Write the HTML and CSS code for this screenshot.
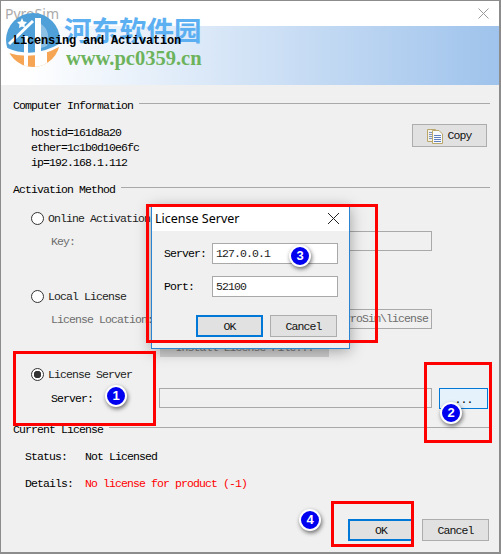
FILE: index.html
```html
<!DOCTYPE html>
<html lang="en">
<head>
    <meta charset="UTF-8">
    <title>PyroSim Licensing and Activation</title>
    <link rel="stylesheet" href="styles.css">
</head>
<body>
    <div class="window">
        <div class="titlebar">
            <span class="title">PyroSim</span>
            <svg class="close close-main" width="11" height="11" viewBox="0 0 11 11"><path d="M0.5 0.5L10.5 10.5M10.5 0.5L0.5 10.5" stroke="#9a9a9a" fill="none"/></svg>
        </div>
        <div class="banner"><span class="banner-text">Licensing and Activation</span></div>

        <div class="content">
            <div class="section-head info-head"><span>Computer Information</span><i></i></div>
            <div class="info-row">
                <div class="info">
                    <div>hostid=161d8a20</div>
                    <div>ether=1c1b0d10e6fc</div>
                    <div>ip=192.168.1.112</div>
                </div>
                <button class="btn copy-btn">
                    <svg width="16" height="16" viewBox="0 0 16 16">
                        <path d="M0.5 1.5H8.5V13.5H0.5Z" fill="#f4f1e4" stroke="#b9a76c"/>
                        <path d="M5.5 2.5H12L15.5 6V15.500H5.5Z" fill="#f7f9fd" stroke="#b9a76c"/>
                        <path d="M7 7.5H14M7 9.5H14M7 11.5H14M7 13.5H14" stroke="#5f7fbe"/>
                        <path d="M2 4.5H5M2 6.5H5M2 8.5H5M2 10.5H5" stroke="#7f93c0"/>
                    </svg>
                    <span>Copy</span>
                </button>
            </div>

            <div class="section-head method-head"><span>Activation Method</span><i></i></div>

            <div class="radio-row online-row"><span class="radio"></span>Online Activation</div>
            <div class="field-row key-row">
                <span class="field-label muted">Key:</span>
                <span class="input key-input"></span>
            </div>

            <div class="radio-row local-row"><span class="radio"></span>Local License</div>
            <div class="field-row location-row">
                <span class="field-label muted">License Location:</span>
                <span class="input location-input muted">C:\Program Files\PyroSim\license</span>
            </div>
            <div class="install-row"><span class="install-btn">Install License File...</span></div>

            <div class="radio-row server-row"><span class="radio checked"></span>License Server</div>
            <div class="field-row server-field">
                <span class="field-label">Server:</span>
                <span class="input server-input"></span>
                <span class="browse-btn">...</span>
            </div>

            <div class="section-head current-head"><span>Current License</span><i></i></div>
            <div class="status-row status-first"><span class="status-label">Status:</span><span>Not Licensed</span></div>
            <div class="status-row status-second"><span class="status-label">Details:</span><span class="error">No license for product (-1)</span></div>

            <div class="actions">
                <button class="btn ok-main">OK</button>
                <button class="btn cancel-main">Cancel</button>
            </div>
        </div>
    </div>

    <!-- dialog on top of the main window -->
    <div class="dialog">
        <div class="dialog-title">
            <span>License Server</span>
            <svg width="13" height="13" viewBox="0 0 13 13"><path d="M1 1L12 12M12 1L1 12" stroke="#222" fill="none"/></svg>
        </div>
        <div class="dialog-body">
            <div class="dialog-row"><span class="dialog-label">Server:</span><span class="input dialog-input">127.0.0.1</span></div>
            <div class="dialog-row"><span class="dialog-label">Port:</span><span class="input dialog-input">52100</span></div>
            <div class="dialog-actions">
                <button class="btn dialog-ok">OK</button>
                <button class="btn dialog-cancel">Cancel</button>
            </div>
        </div>
    </div>

    <!-- annotations -->
    <div class="mark mark-1"></div>
    <div class="mark mark-2"></div>
    <div class="mark mark-3"></div>
    <div class="mark mark-4"></div>
    <div class="badge badge-1">1</div>
    <div class="badge badge-2">2</div>
    <div class="badge badge-3">3</div>
    <div class="badge badge-4">4</div>

    <!-- watermark -->
    <svg class="wm-logo" width="56" height="56" viewBox="0 0 56 56">
        <defs><clipPath id="disc"><circle cx="28" cy="28" r="27"/></clipPath></defs>
        <g clip-path="url(#disc)">
            <path d="M0 0H56V31Q28 48 0 35Z" fill="#4f9fd8"/>
            <path d="M0 40Q28 50 56 34V56H0Z" fill="#f5a553"/>
            <path d="M4 32L28 9" stroke="#fff" stroke-width="3" fill="none"/>
            <path d="M30 6H36V56H30Z" fill="#fff"/>
            <path d="M19 24H23V56H19Z" fill="#fff"/>
            <path d="M36 40H42V56H36Z" fill="#fff"/>
            <path d="M36 12Q46 18 42 34L36 36Z" fill="#fff" fill-opacity="0.35"/>
        </g>
        <path d="M17 6L18.500 9.500L22 10L19.500 12.500L20 16L17 14.500L14 16L14.500 12.500L12 10L15.500 9.500Z" fill="#fff"/>
    </svg>
    <div class="wm-cn">河东软件园</div>
    <div class="wm-url">www.pc0359.cn</div>
</body>
</html>
```
FILE: styles.css
```css
* {
    box-sizing: border-box;
}
html, body {
    margin: 0;
    padding: 0;
}
body {
    width: 501px;
    height: 554px;
    position: relative;
    overflow: hidden;
    background: #f0f0f0;
    font-family: "Liberation Mono", monospace;
    font-size: 11.5px;
    letter-spacing: -0.9px;
    color: #000;
}
.window {
    width: 501px;
    height: 554px;
    border: 1px solid #8c8c8c;
    border-width: 1px 2px 2px 1px;
    background: #f0f0f0;
}
.titlebar {
    height: 25px;
    background: #fff;
    display: flex;
    align-items: center;
    justify-content: space-between;
    padding: 0 10px 0 4px;
}
.title {
    font-family: "Noto Sans", sans-serif;
    font-size: 14px;
    letter-spacing: 0;
    color: #aaa;
}
.banner {
    height: 59px;
    background: linear-gradient(to right, #fff 5%, #9fc3ec 100%);
    padding: 7px 0 0 12px;
    font-size: 12px;
    font-weight: bold;
    line-height: 16px;
    letter-spacing: -0.2px;
    color: #000;
}
.banner-text {
    position: relative;
    z-index: 1;
}
.content {
    padding-left: 12px;
}
.section-head {
    display: flex;
    align-items: center;
    gap: 6px;
    height: 14px;
    width: 477px;
}
.section-head i {
    flex: 1;
    height: 1px;
    margin-top: -4px;
    background: #a9a9a9;
}
.info-head {
    margin-top: 13px;
}
.info-row {
    display: flex;
    justify-content: space-between;
    width: 474px;
    padding: 12px 0 0 18px;
    height: 70px;
}
.info {
    line-height: 15px;
    padding-top: 1px;
}
.btn {
    font-family: inherit;
    font-size: inherit;
    letter-spacing: inherit;
    color: #111;
    background: #e1e1e1;
    border: 1px solid #adadad;
    padding: 0;
    height: 22px;
}
.copy-btn {
    width: 75px;
    height: 23px;
    display: flex;
    align-items: center;
    justify-content: center;
    gap: 4px;
}
.radio-row {
    display: flex;
    align-items: center;
    gap: 4px;
    height: 14px;
    padding-left: 18px;
    color: #222;
}
.radio {
    width: 13px;
    height: 13px;
    border: 1px solid #333;
    border-radius: 50%;
    background: #fff;
}
.radio.checked {
    background: radial-gradient(circle, #333 0 3.500px, #fff 4px);
}
.online-row {
    margin-top: 15px;
}
.local-row {
    margin-top: 38px;
}
.server-row {
    margin-top: 9px;
}
.field-row {
    display: flex;
    align-items: center;
    height: 20px;
    padding-left: 38px;
}
.field-label {
    width: 108px;
    flex: none;
}
.muted {
    color: #6d6d6d;
}
.input {
    background: #fff;
    border: 1px solid #a9a9a9;
    height: 20px;
    line-height: 18px;
    padding-left: 3px;
    white-space: nowrap;
    overflow: hidden;
}
.key-row {
    margin-top: 6px;
}
.key-input,
.location-input,
.server-input {
    width: 273px;
    background: #f0f0f0;
}
.location-input {
    display: flex;
    justify-content: flex-end;
    padding-right: 3px;
}
.location-row {
    margin-top: 6px;
}
.install-row {
    padding: 10px 0 0 147px;
    height: 29px;
}
.install-btn {
    display: block;
    width: 169px;
    height: 18px;
    background: #cfcfcf;
    color: #777;
    text-align: center;
    line-height: 18px;
}
.server-field {
    margin-top: 7px;
}
.browse-btn {
    width: 49px;
    height: 21px;
    margin-left: 7px;
    background: #e5f1fb;
    border: 1px solid #0078d7;
    text-align: center;
    line-height: 21px;
}
.current-head {
    margin-top: 14px;
}
.status-row {
    display: flex;
    height: 14px;
    padding-left: 12px;
}
.status-label {
    width: 60px;
}
.status-first {
    margin-top: 14px;
}
.status-second {
    margin-top: 13px;
}
.error {
    color: #f00;
}
.actions {
    display: flex;
    gap: 8px;
    margin-top: 28px;
    padding-left: 335px;
}
.ok-main {
    width: 66px;
    border: 2px solid #0078d7;
}
.cancel-main {
    width: 67px;
}

.dialog {
    position: absolute;
    left: 151px;
    top: 206px;
    width: 199px;
    height: 143px;
    background: #f0f0f0;
    border: 1px solid #2a84d2;
    box-shadow: 0 2px 14px rgba(0, 0, 0, 0.35);
}
.dialog-title {
    height: 24px;
    background: #fff;
    display: flex;
    align-items: center;
    justify-content: space-between;
    padding: 0 9px 2px 3px;
    font-family: "Noto Sans", sans-serif;
    font-size: 12.5px;
    letter-spacing: 0;
}
.dialog-body {
    padding: 12px 11px 0 12px;
}
.dialog-row {
    display: flex;
    align-items: center;
    height: 21px;
    margin-bottom: 12px;
}
.dialog-label {
    width: 48px;
}
.dialog-input {
    width: 126px;
    height: 21px;
    line-height: 19px;
    color: #222;
}
.dialog-actions {
    display: flex;
    gap: 7px;
    margin-top: 18px;
    padding-left: 32px;
}
.dialog-ok {
    width: 67px;
    border: 2px solid #0078d7;
}
.dialog-cancel {
    width: 67px;
}

.mark {
    position: absolute;
    border: 3px solid #f00;
}
.mark-1 { left: 13px; top: 351px; width: 143px; height: 75px; }
.mark-2 { left: 424px; top: 362px; width: 68px; height: 81px; }
.mark-3 { left: 146px; top: 204px; width: 232px; height: 139px; }
.mark-4 { left: 331px; top: 501px; width: 83px; height: 46px; }

.badge {
    position: absolute;
    width: 22px;
    height: 22px;
    border: 2px solid #fff;
    border-radius: 50%;
    background: #0000f0;
    color: #fff;
    font-family: "Liberation Sans", sans-serif;
    font-size: 13px;
    font-weight: bold;
    letter-spacing: 0;
    line-height: 18px;
    text-align: center;
    box-shadow: 1px 2px 4px rgba(0, 0, 0, 0.55);
}
.badge-1 { left: 105px; top: 385px; }
.badge-2 { left: 440px; top: 402px; }
.badge-3 { left: 289px; top: 245px; }
.badge-4 { left: 299px; top: 509px; }

.wm-logo {
    position: absolute;
    left: 5px;
    top: 12px;
}
.wm-cn {
    position: absolute;
    left: 64px;
    top: 11px;
    font-family: "Noto Sans CJK SC", sans-serif;
    font-size: 27.500px;
    font-weight: bold;
    line-height: 36px;
    letter-spacing: 0;
    color: #5cb0f2;
}
.wm-url {
    position: absolute;
    left: 66px;
    top: 47px;
    font-family: "Liberation Serif", serif;
    font-size: 20.500px;
    font-weight: bold;
    line-height: 22px;
    letter-spacing: 0;
    color: #6db35c;
}
```
